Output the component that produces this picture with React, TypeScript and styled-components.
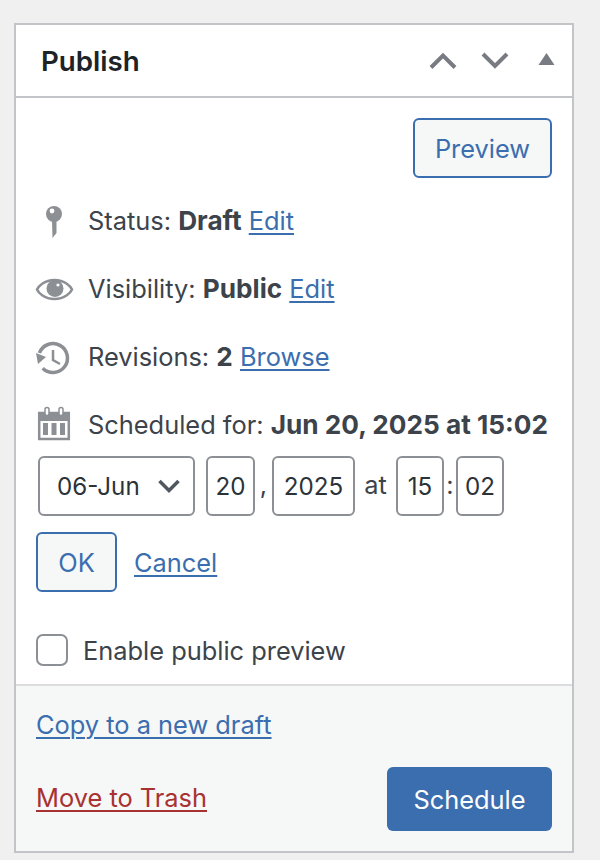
import React from "react";
import styled, { createGlobalStyle } from "styled-components";

const GlobalStyle = createGlobalStyle`
  * {
    box-sizing: border-box;
  }
  body {
    margin: 0;
    background-color: #f0f0f1;
    font-family: Inter, "Liberation Sans", sans-serif;
    color: #3c434a;
    font-size: 25.4px;
  }
  b {
    font-size: 26.2px;
  }
`;

const Page = styled.div`
  width: 600px;
  height: 860px;
  padding: 23px 26px 0 14px;
  overflow: hidden;
`;

const Panel = styled.section`
  width: 560px;
  height: 830px;
  border: 2px solid #c3c4c7;
  background-color: #fff;
  display: flex;
  flex-direction: column;
`;

const Header = styled.header`
  height: 73px;
  flex-shrink: 0;
  border-bottom: 2px solid #c3c4c7;
  padding: 0 11px 0 25px;
  display: flex;
  align-items: center;
`;

const Title = styled.h2`
  margin: 1px 0 0;
  flex: 1;
  font-size: 27.7px;
  font-weight: 600;
  color: #1d2327;
`;

const HeaderIcons = styled.div`
  display: flex;
  align-items: center;
  gap: 24px;
`;

const HeaderIcon = styled.svg`
  width: 28px;
  height: 18px;
  display: block;
  overflow: visible;
`;

const Body = styled.div`
  flex: 1;
  padding: 20px 20px 0 20px;
`;

const PreviewRow = styled.div`
  display: flex;
  justify-content: flex-end;
  margin-bottom: 9px;
`;

const OutlineButton = styled.button<{ $width: number }>`
  height: 60px;
  padding: 0;
  width: ${(p) => p.$width}px;
  border: 2px solid #3b6eaf;
  border-radius: 6px;
  background-color: #f6f7f7;
  color: #3b6eaf;
  font: inherit;
`;

const MetaRow = styled.div`
  height: 68px;
  display: flex;
  align-items: center;
  white-space: nowrap;
`;

const MetaText = styled.span`
  margin-bottom: 2px;
`;

const IconSlot = styled.span`
  width: 52px;
  height: 40px;
  flex-shrink: 0;
  display: block;
  svg {
    display: block;
    overflow: visible;
  }
`;

const Link = styled.a<{ $danger?: boolean }>`
  color: ${(p) => (p.$danger ? "#a83232" : "#3b6eaf")};
  text-decoration: underline;
  text-decoration-thickness: 2px;
  text-underline-offset: 3px;
`;

const TrashLink = styled(Link)`
  margin-bottom: 3px;
`;

const DateRow = styled.div`
  display: flex;
  align-items: center;
  margin: -3px 0 0 2px;
  height: 60px;
`;

const SelectBox = styled.div`
  width: 157px;
  height: 60px;
  border: 2px solid #8c8f94;
  border-radius: 6px;
  background-color: #fff;
  padding: 0 13px 0 17px;
  display: flex;
  align-items: center;
  justify-content: space-between;
  color: #2c3338;
  font-size: 24.2px;
  margin-right: 11px;
`;

const NumberBox = styled.div<{ $width: number }>`
  width: ${(p) => p.$width}px;
  height: 60px;
  border: 2px solid #8c8f94;
  border-radius: 6px;
  display: flex;
  align-items: center;
  justify-content: center;
  color: #2c3338;
  font-size: 24.2px;
`;

const Separator = styled.span<{ $width: number }>`
  width: ${(p) => p.$width}px;
  text-align: center;
  position: relative;
  top: -2px;
`;

const ActionRow = styled.div`
  display: flex;
  align-items: center;
  gap: 17px;
  margin-top: 16px;
`;

const CheckRow = styled.label`
  display: flex;
  align-items: center;
  gap: 15px;
  margin-top: 42px;
`;

const CheckBox = styled.span`
  width: 32px;
  height: 32px;
  border: 2px solid #8c8f94;
  border-radius: 7px;
  background-color: #fff;
`;

const Footer = styled.footer`
  height: 167px;
  flex-shrink: 0;
  border-top: 2px solid #dcdcde;
  background-color: #f6f7f7;
  padding: 23px 20px 20px 20px;
  display: flex;
  flex-direction: column;
`;

const FooterRow = styled.div`
  display: flex;
  align-items: center;
  justify-content: space-between;
  margin-top: auto;
`;

const PrimaryButton = styled.button`
  width: 165px;
  height: 64px;
  border: none;
  border-radius: 6px;
  background-color: #3b6eaf;
  color: #fff;
  font: inherit;
`;

const gray = "#8c8f94";

const App = () => {
  return (
    <>
      <GlobalStyle />
      <Page>
        <Panel>
          <Header>
            <Title>Publish</Title>
            <HeaderIcons>
              <HeaderIcon viewBox="0 0 28 18">
                <path d="M2 15.5 L14 3.5 L26 15.5" fill="none" stroke="#787c82" strokeWidth="4" />
              </HeaderIcon>
              <HeaderIcon viewBox="0 0 28 18">
                <path d="M2 2 L14 14 L26 2" fill="none" stroke="#787c82" strokeWidth="4" />
              </HeaderIcon>
              <HeaderIcon viewBox="0 0 28 18">
                <path d="M13.5 1 L21.5 13 L5.5 13 Z" fill="#787c82" />
              </HeaderIcon>
            </HeaderIcons>
          </Header>
          <Body>
            <PreviewRow>
              <OutlineButton $width={139}>Preview</OutlineButton>
            </PreviewRow>
            <MetaRow>
              <IconSlot>
                <svg width="40" height="40" viewBox="0 0 40 40">
                  <circle cx="18" cy="13" r="8" fill={gray} />
                  <path d="M16 19 L20.5 19 L20.5 32 L16.5 37 Z" fill={gray} />
                  <circle cx="16" cy="10" r="2.4" fill="#fff" />
                </svg>
              </IconSlot>
              <MetaText>
                Status: <b>Draft</b> <Link>Edit</Link>
              </MetaText>
            </MetaRow>
            <MetaRow>
              <IconSlot>
                <svg width="40" height="40" viewBox="0 0 40 40">
                  <path
                    d="M18.5 11 C8 11 2 18 1 20.5 C2 23 8 30 18.5 30 C29 30 35 23 36 20.5 C35 18 29 11 18.5 11 Z"
                    fill="none"
                    stroke={gray}
                    strokeWidth="2.5"
                  />
                  <circle cx="19" cy="19.5" r="8.5" fill={gray} />
                  <circle cx="22" cy="16" r="1.6" fill="#fff" />
                </svg>
              </IconSlot>
              <MetaText>
                Visibility: <b>Public</b> <Link>Edit</Link>
              </MetaText>
            </MetaRow>
            <MetaRow>
              <IconSlot>
                <svg width="40" height="40" viewBox="0 0 40 40">
                  <path
                    d="M3.4 16 A14.5 14.5 0 1 1 6.7 31.3"
                    fill="none"
                    stroke={gray}
                    strokeWidth="3.5"
                  />
                  <path d="M0 16 L10 20 L2 27 Z" fill={gray} />
                  <path d="M17 13 L17 23 L24 27" fill="none" stroke={gray} strokeWidth="2.5" />
                </svg>
              </IconSlot>
              <MetaText>
                Revisions: <b>2</b> <Link>Browse</Link>
              </MetaText>
            </MetaRow>
            <MetaRow>
              <IconSlot>
                <svg width="40" height="40" viewBox="0 0 40 40">
                  <rect x="3.2" y="8" width="29.6" height="26" fill="none" stroke={gray} strokeWidth="2.5" />
                  <rect x="2" y="7" width="32" height="9" fill={gray} />
                  <rect x="9" y="2.5" width="4" height="8" rx="2" fill="#fff" stroke={gray} strokeWidth="1.5" />
                  <rect x="23" y="2.5" width="4" height="8" rx="2" fill="#fff" stroke={gray} strokeWidth="1.5" />
                  <rect x="7" y="18" width="5" height="12" fill={gray} />
                  <rect x="15.5" y="18" width="5" height="12" fill={gray} />
                  <rect x="24" y="18" width="5" height="12" fill={gray} />
                </svg>
              </IconSlot>
              <MetaText>
                Scheduled for: <b>Jun 20, 2025 at 15:02</b>
              </MetaText>
            </MetaRow>
            <DateRow>
              <SelectBox>
                06-Jun
                <svg width="22" height="14" viewBox="0 0 22 14">
                  <path d="M1.5 2 L11 11.5 L20.5 2" fill="none" stroke="#50575e" strokeWidth="3.5" />
                </svg>
              </SelectBox>
              <NumberBox $width={49}>20</NumberBox>
              <Separator $width={17}>,</Separator>
              <NumberBox $width={83}>2025</NumberBox>
              <Separator $width={41}>at</Separator>
              <NumberBox $width={48}>15</NumberBox>
              <Separator $width={12}>:</Separator>
              <NumberBox $width={48}>02</NumberBox>
            </DateRow>
            <ActionRow>
              <OutlineButton $width={81}>OK</OutlineButton>
              <Link>Cancel</Link>
            </ActionRow>
            <CheckRow>
              <CheckBox />
              Enable public preview
            </CheckRow>
          </Body>
          <Footer>
            <div>
              <Link>Copy to a new draft</Link>
            </div>
            <FooterRow>
              <TrashLink $danger>Move to Trash</TrashLink>
              <PrimaryButton>Schedule</PrimaryButton>
            </FooterRow>
          </Footer>
        </Panel>
      </Page>
    </>
  );
};

export default App;
